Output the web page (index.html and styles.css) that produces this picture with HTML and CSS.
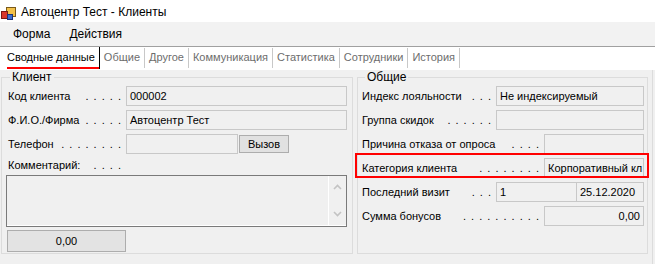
FILE: index.html
```html
<!DOCTYPE html>
<html lang="ru">
<head>
<meta charset="utf-8">
<title>Автоцентр Тест - Клиенты</title>
<link rel="stylesheet" href="styles.css">
</head>
<body>
<div class="window">
  <div class="titlebar">
    <svg class="app-icon" viewBox="0 0 16 16" width="16" height="16">
      <rect x="5.5" y="3.5" width="9" height="9" fill="#f3c14a" stroke="#7a5a1a"/>
      <rect x="0.5" y="7.5" width="6" height="7" fill="#d9372c" stroke="#7a1a14"/>
      <rect x="6.5" y="10.5" width="5" height="5" fill="#3c6fd1" stroke="#1a327a"/>
    </svg>
    <span class="title">Автоцентр Тест - Клиенты</span>
  </div>
  <div class="menubar">
    <span class="menu-item">Форма</span>
    <span class="menu-item">Действия</span>
  </div>
  <div class="tabstrip">
    <div class="tab active"><span>Сводные данные</span></div>
    <div class="tab"><span>Общие</span></div>
    <div class="tab"><span>Другое</span></div>
    <div class="tab"><span>Коммуникация</span></div>
    <div class="tab"><span>Статистика</span></div>
    <div class="tab"><span>Сотрудники</span></div>
    <div class="tab"><span>История</span></div>
  </div>
  <div class="page">
    <fieldset class="group group-client">
      <legend>Клиент</legend>
      <div class="rows">
        <div class="row">
          <div class="label"><span>Код клиента</span><span class="dots">. . . . .</span></div>
          <div class="field grow">000002</div>
        </div>
        <div class="row">
          <div class="label"><span>Ф.И.О./Фирма</span><span class="dots">. . . . .</span></div>
          <div class="field grow">Автоцентр Тест</div>
        </div>
        <div class="row">
          <div class="label"><span>Телефон</span><span class="dots">. . . . . . . .</span></div>
          <div class="field phone"></div>
          <div class="button">Вызов</div>
        </div>
        <div class="comment-label label"><span>Комментарий:</span><span class="dots">. . . .</span></div>
        <div class="comment-box">
          <div class="scrollbar">
            <svg width="9" height="6" viewBox="0 0 9 6"><path d="M1 5 L4.5 1.5 L8 5" fill="none" stroke="#c3c3c3" stroke-width="1.6"/></svg>
            <svg width="9" height="6" viewBox="0 0 9 6"><path d="M1 1 L4.5 4.5 L8 1" fill="none" stroke="#c3c3c3" stroke-width="1.6"/></svg>
          </div>
        </div>
        <div class="sum-box">0,00</div>
      </div>
    </fieldset>
    <fieldset class="group group-common">
      <legend>Общие</legend>
      <div class="rows">
        <div class="row">
          <div class="rlabel"><span>Индекс лояльности</span><span class="dots">. . .</span></div>
          <div class="field wide">Не индексируемый</div>
        </div>
        <div class="row">
          <div class="rlabel"><span>Группа скидок</span><span class="dots">. . . . . .</span></div>
          <div class="field wide"></div>
        </div>
        <div class="row">
          <div class="rlabel"><span>Причина отказа от опроса</span><span class="dots">. . . .</span></div>
          <div class="field narrow"></div>
        </div>
        <div class="row highlight">
          <div class="rlabel"><span>Категория клиента</span><span class="dots">. . . . . . . .</span></div>
          <div class="field narrow">Корпоративный кл</div>
        </div>
        <div class="row">
          <div class="rlabel"><span>Последний визит</span><span class="dots">. . .</span></div>
          <div class="field visits">1</div>
          <div class="field date">25.12.2020</div>
        </div>
        <div class="row">
          <div class="rlabel"><span>Сумма бонусов</span><span class="dots">. . . . . . . . . .</span></div>
          <div class="field narrow right">0,00</div>
        </div>
      </div>
    </fieldset>
  </div>
</div>
</body>
</html>
```
FILE: styles.css
```css
* { box-sizing: border-box; }
html, body { margin: 0; padding: 0; }
body {
  width: 655px;
  height: 264px;
  overflow: hidden;
  background: #f0f0f0;
  font-family: "Liberation Sans", Arial, sans-serif;
  font-size: 11px;
  color: #000;
}
.titlebar {
  height: 22px;
  background: #fff;
  display: flex;
  align-items: center;
  padding-left: 1px;
  padding-top: 1px;
}
.app-icon { width: 16px; height: 16px; margin-right: 4px; flex: none; }
.title { font-size: 12px; }
.menubar {
  height: 24px;
  background: #f2f2f2;
  display: flex;
  align-items: center;
  padding-left: 6px;
  font-size: 12px;
}
.menu-item { padding: 0 7px; }
.menu-item + .menu-item { margin-left: 5px; }
.tabstrip {
  height: 24px;
  border-top: 1px solid #a0a0a0;
  background: #fff;
  display: flex;
  padding-left: 3px;
  font-size: 11px;
}
.tab {
  display: flex;
  padding-left: 4px;
  margin: 1px 0 2px;
  border-right: 1px solid #c8c8c8;
  color: #6d6d6d;
}
.tab span {
  display: flex;
  align-items: center;
  padding-right: 4px;
  border-bottom: 2px solid transparent;
}
.tab.active {
  color: #000;
  border-right-color: #000;
  margin: 0 0 1px;
}
.tab.active span { border-bottom-color: #f00; }
.page {
  width: 653px;
  height: 194px;
  display: flex;
  gap: 4px;
  padding-left: 1px;
  border-right: 1px solid #dcdcdc;
}
.group {
  margin: 0;
  min-width: 0;
  height: 184px;
  border: 1px solid #dcdcdc;
}
.group legend {
  font-size: 12px;
  line-height: 14px;
  padding: 0 2px;
}
.group-client { width: 352px; padding: 0 5px 0 4px; }
.group-client legend { margin-left: 4px; }
.group-common { width: 291px; padding: 0 3px 0 4px; }
.group-common legend { margin-left: 3px; }
.rows {
  padding-top: 2px;
  display: flex;
  flex-direction: column;
  gap: 4px;
}
.row { display: flex; height: 20px; align-items: center; }
.label {
  width: 120px;
  flex: none;
  padding: 0 5px 0 2px;
  display: flex;
  justify-content: space-between;
  white-space: nowrap;
}
.rlabel {
  flex: 1;
  min-width: 0;
  padding: 0 5px 0 0;
  display: flex;
  justify-content: space-between;
  white-space: nowrap;
}
.dots { word-spacing: 2px; }
.field {
  height: 20px;
  border: 1px solid #c8c8c8;
  padding: 0 3px;
  display: flex;
  align-items: center;
  white-space: nowrap;
  overflow: hidden;
  flex: none;
}
.grow { flex: 1; }
.phone { width: 112px; }
.button {
  width: 50px;
  height: 18px;
  margin-left: 1px;
  background: #e1e1e1;
  border: 1px solid #adadad;
  display: flex;
  align-items: center;
  justify-content: center;
}
.wide { width: 148px; }
.narrow { width: 100px; }
.visits { width: 81px; }
.date { width: 68px; margin-left: -1px; }
.right { justify-content: flex-end; }
.highlight { position: relative; }
.highlight::after {
  content: "";
  position: absolute;
  left: -7px;
  right: -5px;
  top: -5px;
  bottom: 0;
  border: 2px solid #f00;
}
.comment-label { height: 14px; align-items: center; }
.comment-box {
  height: 52px;
  margin-top: -1px;
  border: 1px solid #7a7a7a;
  display: flex;
  justify-content: flex-end;
  box-shadow: inset 0 -1px #fff;
}
.scrollbar {
  width: 18px;
  border-left: 1px solid #fff;
  display: flex;
  flex-direction: column;
  justify-content: space-between;
  align-items: center;
  padding: 8px 0 9px;
}
.sum-box {
  width: 119px;
  height: 22px;
  margin: -1px 0 0 1px;
  background: #e3e3e3;
  border: 1px solid #adadad;
  display: flex;
  align-items: center;
  justify-content: center;
}
```
